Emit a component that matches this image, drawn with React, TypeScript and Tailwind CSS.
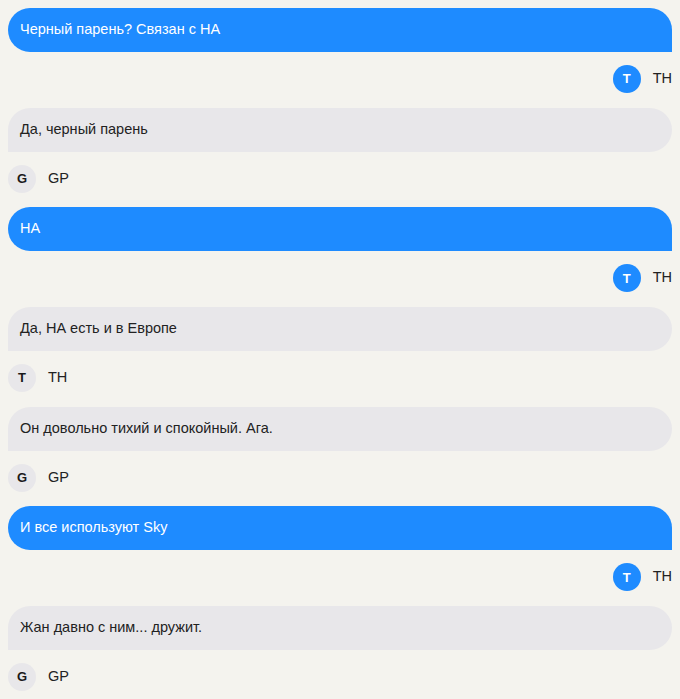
const messages = [
  { from: "user", text: "Черный парень? Связан с НА", name: "TH" },
  { from: "bot", text: "Да, черный парень", name: "GP", letter: "G" },
  { from: "user", text: "НА", name: "TH" },
  { from: "bot", text: "Да, НА есть и в Европе", name: "TH", letter: "T" },
  { from: "bot", text: "Он довольно тихий и спокойный. Ага.", name: "GP", letter: "G" },
  { from: "user", text: "И все используют Sky", name: "TH" },
  { from: "bot", text: "Жан давно с ним... дружит.", name: "GP", letter: "G" },
];

const App = () => {
  return (
    <div
      className="min-h-[699px] bg-[#f4f3ee] px-2 pt-2 text-[14.5px] text-[#222]"
      style={{ fontFamily: '"Liberation Sans", Arial, sans-serif' }}
    >
      {messages.map((m, i) =>
        m.from === "user" ? (
          <div key={i} className="mb-[13.67px]">
            <div className="flex h-[44px] items-center rounded-[22px] rounded-br-none bg-[#1e8bff] px-3 text-white">
              {m.text}
            </div>
            <div className="mt-3 flex h-[30px] items-center justify-end gap-3">
              <div className="flex h-7 w-7 items-center justify-center rounded-full bg-[#1e8bff] text-[13px] font-bold text-white">
                T
              </div>
              <span>{m.name}</span>
            </div>
          </div>
        ) : (
          <div key={i} className="mb-[13.67px]">
            <div className="flex h-[44px] items-center rounded-[22px] rounded-bl-none bg-[#e8e7ea] px-3">
              {m.text}
            </div>
            <div className="mt-3 flex h-[30px] items-center gap-3">
              <div className="flex h-7 w-7 items-center justify-center rounded-full bg-[#e8e7ea] text-[13px] font-bold text-[#1a1a1a]">
                {m.letter}
              </div>
              <span>{m.name}</span>
            </div>
          </div>
        )
      )}
    </div>
  );
};

export default App;
